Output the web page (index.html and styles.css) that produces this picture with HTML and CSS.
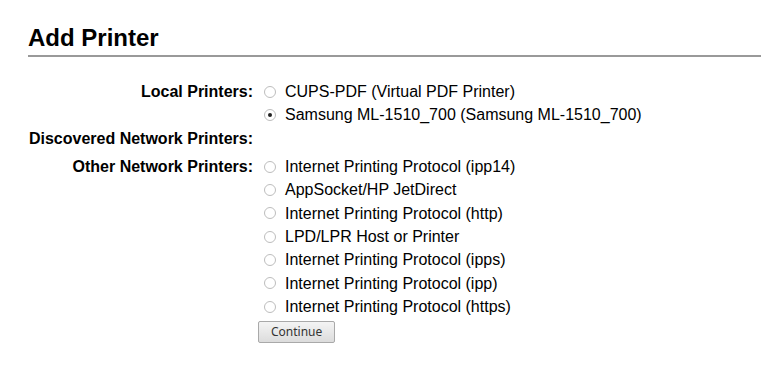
FILE: index.html
```html
<!DOCTYPE html>
<html lang="en">
<head>
    <meta charset="UTF-8">
    <title>Add Printer - CUPS</title>
    <link rel="stylesheet" href="styles.css">
</head>
<body>
    <div class="page">
        <h2 class="title">Add Printer</h2>

        <form class="add-form">
            <table class="choices">
                <tr>
                    <th>Local Printers:</th>
                    <td>
                        <label class="choice"><input type="radio" name="device"> CUPS-PDF (Virtual PDF Printer)</label>
                        <label class="choice"><input type="radio" name="device" checked> Samsung ML-1510_700 (Samsung ML-1510_700)</label>
                    </td>
                </tr>
                <tr class="empty-row">
                    <th>Discovered Network Printers:</th>
                    <td></td>
                </tr>
                <tr>
                    <th>Other Network Printers:</th>
                    <td>
                        <label class="choice"><input type="radio" name="device"> Internet Printing Protocol (ipp14)</label>
                        <label class="choice"><input type="radio" name="device"> AppSocket/HP JetDirect</label>
                        <label class="choice"><input type="radio" name="device"> Internet Printing Protocol (http)</label>
                        <label class="choice"><input type="radio" name="device"> LPD/LPR Host or Printer</label>
                        <label class="choice"><input type="radio" name="device"> Internet Printing Protocol (ipps)</label>
                        <label class="choice"><input type="radio" name="device"> Internet Printing Protocol (ipp)</label>
                        <label class="choice"><input type="radio" name="device"> Internet Printing Protocol (https)</label>
                    </td>
                </tr>
                <tr>
                    <th></th>
                    <td><button type="button" class="btn">Continue</button></td>
                </tr>
            </table>
        </form>
    </div>
</body>
</html>
```

FILE: styles.css
```css
body {
    margin: 0;
    padding: 0;
    background-color: #fff;
    color: #000;
    font-family: "Liberation Sans", Arial, sans-serif;
    font-size: 16px;
}

.page {
    padding: 26px 0 0 28px;
}

.title {
    margin: 0;
    padding-bottom: 5px;
    font-size: 24px;
    font-weight: bold;
    line-height: 24px;
    border-bottom: 2px solid #999;
}

.add-form {
    margin-top: 23px;
}

.choices {
    border-collapse: collapse;
}

.choices th {
    width: 225px;
    padding: 0 6px 0 0;
    text-align: right;
    vertical-align: top;
    font-weight: bold;
    line-height: 23.33px;
    white-space: nowrap;
}

.choices td {
    padding: 0 0 0 5px;
    vertical-align: top;
    line-height: 23.33px;
}

.empty-row th {
    padding-bottom: 5px;
}

.choice {
    display: flex;
    align-items: center;
    gap: 9px;
}

.choice input {
    appearance: none;
    -webkit-appearance: none;
    margin: 0;
    width: 12px;
    height: 12px;
    border: 1px solid #bdbdbd;
    border-radius: 50%;
    background: #fff;
    position: relative;
}

.choice input:checked::after {
    content: "";
    position: absolute;
    left: 3px;
    top: 3px;
    width: 4px;
    height: 4px;
    border-radius: 50%;
    background: #222;
}

.btn {
    margin: 3px 0 0 -6px;
    padding: 0 12px;
    height: 22px;
    font-family: "Noto Sans", "Open Sans", sans-serif;
    font-size: 12px;
    line-height: 20px;
    color: #333;
    background: linear-gradient(#f4f4f4, #dcdcdc);
    border: 1px solid #a9a9a9;
    border-radius: 2px;
}
```
